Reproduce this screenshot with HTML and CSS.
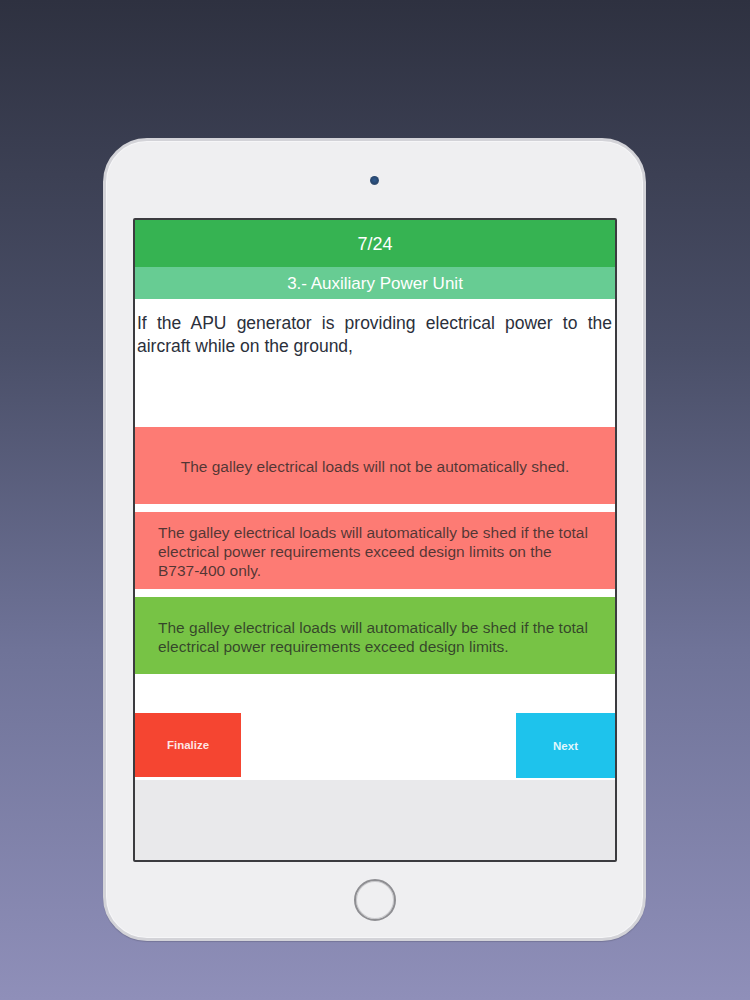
FILE: index.html
```html
<!DOCTYPE html>
<html>
<head>
<meta charset="utf-8">
<link rel="stylesheet" href="styles.css">
</head>
<body>
<div class="stage">
  <div class="tablet">
    <div class="camera-row"><span class="camera"></span></div>
    <div class="screen">
      <div class="header">7/24</div>
      <div class="subheader">3.- Auxiliary Power Unit</div>
      <div class="question">If the APU generator is providing electrical power to the aircraft while on the ground,</div>
      <div class="answers">
        <div class="answer wrong center">The galley electrical loads will not be automatically shed.</div>
        <div class="answer wrong">The galley electrical loads will automatically be shed if the total electrical power requirements exceed design limits on the B737-400 only.</div>
        <div class="answer right">The galley electrical loads will automatically be shed if the total electrical power requirements exceed design limits.</div>
      </div>
      <div class="actions">
        <div class="btn finalize">Finalize</div>
        <div class="btn next">Next</div>
      </div>
      <div class="footer"></div>
    </div>
    <div class="home-row"><span class="home"></span></div>
  </div>
</div>
</body>
</html>
```
FILE: styles.css
```css
* { box-sizing: border-box; }
html, body { margin: 0; padding: 0; }
body {
  width: 750px;
  height: 1000px;
  overflow: hidden;
  background: linear-gradient(to bottom, #2e3140 0%, #4a4f68 35%, #6f7398 65%, #8f8fb9 100%);
  font-family: "Liberation Sans", Arial, sans-serif;
}
.stage {
  padding-top: 138px;
  padding-left: 103px;
}
.tablet {
  width: 543px;
  height: 803px;
  border: 3px solid #d3d3d8;
  border-radius: 44px;
  background: #efeff1;
  box-shadow: inset 0 0 0 1px #f6f6f8, 0 1px 1px rgba(0,0,0,0.15);
  padding: 0 27px;
  display: flex;
  flex-direction: column;
}
.camera-row {
  height: 77px;
  display: flex;
  justify-content: center;
  padding-top: 35px;
}
.camera {
  width: 9px;
  height: 9px;
  border-radius: 50%;
  background: radial-gradient(circle at 50% 45%, #2f5a8f 0%, #27466e 55%, #6f7b8c 100%);
}
.screen {
  width: 484px;
  height: 644px;
  border: 2px solid #3b3b3f;
  border-radius: 2px;
  background: #ffffff;
  display: flex;
  flex-direction: column;
}
.header {
  height: 47px;
  padding-top: 2px;
  background: #36b352;
  color: #ffffff;
  font-size: 18px;
  display: flex;
  align-items: center;
  justify-content: center;
}
.subheader {
  height: 32px;
  padding-top: 2px;
  background: #67cc93;
  color: #ffffff;
  font-size: 17px;
  display: flex;
  align-items: center;
  justify-content: center;
}
.question {
  height: 128px;
  padding: 13px 3px 0 2px;
  color: #2b303b;
  font-size: 17.5px;
  line-height: 23px;
  text-align: justify;
}
.answers {
  display: flex;
  flex-direction: column;
  gap: 8px;
}
.answer {
  height: 77px;
  padding: 2px 23px 0;
  display: flex;
  align-items: center;
  font-size: 15.5px;
  line-height: 19px;
  color: rgba(35, 35, 35, 0.78);
}
.answer.center { justify-content: center; text-align: center; }
.wrong { background: #fd7b74; }
.right { background: #77c345; }
.actions {
  margin-top: 39px;
  height: 67px;
  display: flex;
  justify-content: space-between;
  align-items: flex-start;
}
.btn {
  height: 64px;
  display: flex;
  align-items: center;
  justify-content: center;
  color: rgba(255,255,255,0.88);
  font-weight: bold;
  font-size: 11.5px;
}
.finalize { width: 106px; background: #f54531; }
.next { width: 99px; height: 65px; background: #1ec3ec; }
.footer {
  flex: 1;
  background: #e9e9eb;
}
.home-row {
  flex: 1;
  display: flex;
  justify-content: center;
  align-items: center;
  padding-bottom: 1px;
}
.home {
  width: 42px;
  height: 42px;
  border-radius: 50%;
  border: 2px solid #8e8e92;
  box-shadow: inset 0 0 0 1px #c9c9cc;
}
```
